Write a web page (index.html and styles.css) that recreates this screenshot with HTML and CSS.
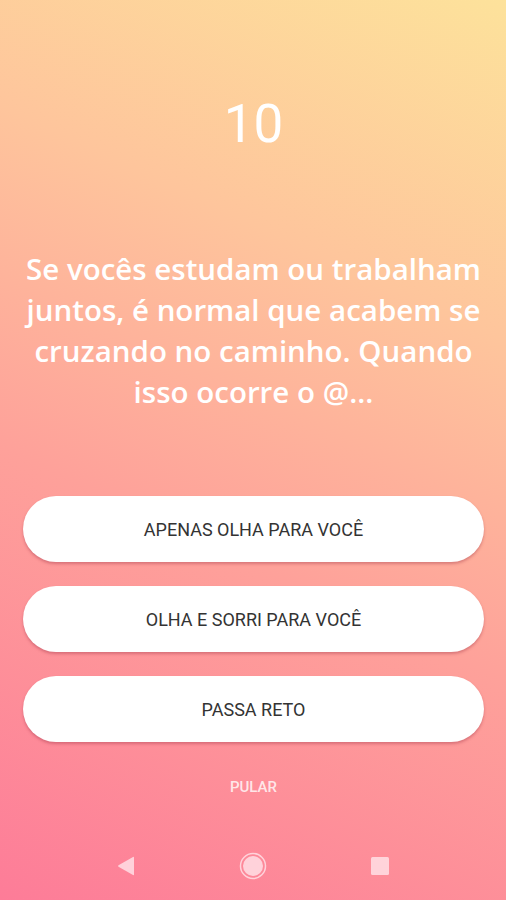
FILE: index.html
```html
<!DOCTYPE html>
<html lang="pt-BR">

<head>
    <meta charset="UTF-8">
    <meta name="viewport" content="width=device-width, initial-scale=1.0">
    <link rel="stylesheet" href="styles.css">
    <title>Quiz</title>
</head>

<body>
    <div class="screen">
        <main class="quiz">
            <div class="counter">10</div>

            <p class="question">Se vocês estudam ou trabalham juntos, é normal que acabem se cruzando no caminho. Quando isso ocorre o @...</p>

            <!-- Answer options -->
            <div class="answers">
                <button type="button" class="answer">APENAS OLHA PARA VOCÊ</button>
                <button type="button" class="answer">OLHA E SORRI PARA VOCÊ</button>
                <button type="button" class="answer">PASSA RETO</button>
            </div>

            <button type="button" class="skip">PULAR</button>
        </main>

        <!-- Android navigation bar -->
        <nav class="navbar">
            <svg class="nav-icon" width="18" height="20" viewBox="0 0 18 20">
                <path d="M17 1.5 L17 18.5 Q17 19.5 16 19 L1.5 10.8 Q0.5 10 1.5 9.2 L16 1 Q17 0.5 17 1.5 Z" />
            </svg>
            <svg class="nav-icon" width="28" height="28" viewBox="0 0 28 28">
                <circle class="ring" cx="14" cy="14" r="12.5" />
                <circle cx="14" cy="14" r="10" />
            </svg>
            <svg class="nav-icon" width="18" height="18" viewBox="0 0 18 18">
                <rect x="0" y="0" width="18" height="18" rx="1.5" />
            </svg>
        </nav>
    </div>
</body>

</html>
```

FILE: styles.css
```css
body {
    margin: 0;
    padding: 0;
    font-family: 'Open Sans', sans-serif;
}

.screen {
    width: 506px;
    height: 900px;
    display: flex;
    flex-direction: column;
    background: linear-gradient(205deg, #fde29b 0%, #fec59c 30%, #fea19a 60%, #fd7c98 100%);
    overflow: hidden;
}

.quiz {
    flex: 1;
    display: flex;
    flex-direction: column;
    align-items: center;
    padding: 0 22px 0 23px;
}

.counter {
    margin-top: 96px;
    font-family: 'Roboto', sans-serif;
    font-size: 53px;
    line-height: 56px;
    color: #fff;
}

.question {
    margin: 96px -3px 0;
    font-size: 29.5px;
    font-weight: 600;
    line-height: 41px;
    color: #fff;
    text-align: center;
}

.answers {
    width: 100%;
    margin-top: 84px;
    display: flex;
    flex-direction: column;
    gap: 24px;
}

.answer {
    height: 66px;
    border: none;
    border-radius: 33px;
    background-color: #fff;
    box-shadow: 0 2px 3px rgba(150, 40, 60, 0.35);
    font-family: 'Roboto', sans-serif;
    font-size: 18px;
    color: #333;
    cursor: pointer;
}

.skip {
    margin-top: 32px;
    padding: 4px 8px;
    border: none;
    background: none;
    font-family: 'Roboto', sans-serif;
    font-size: 15px;
    font-weight: 500;
    color: rgba(255, 255, 255, 0.8);
    cursor: pointer;
}

.navbar {
    height: 68px;
    display: flex;
    align-items: center;
    justify-content: center;
    gap: 104px;
    padding-top: 2px;
}

.nav-icon {
    fill: rgba(255, 235, 240, 0.75);
}

.nav-icon .ring {
    fill: none;
    stroke: rgba(255, 235, 240, 0.75);
    stroke-width: 1.5;
}
```
